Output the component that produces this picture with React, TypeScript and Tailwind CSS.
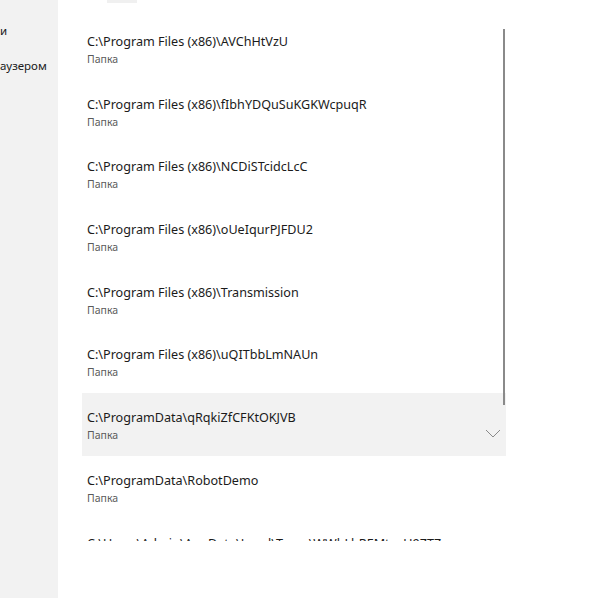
import React from 'react';

const folders = [
  'C:\\Program Files (x86)\\AVChHtVzU',
  'C:\\Program Files (x86)\\fIbhYDQuSuKGKWcpuqR',
  'C:\\Program Files (x86)\\NCDiSTcidcLcC',
  'C:\\Program Files (x86)\\oUeIqurPJFDU2',
  'C:\\Program Files (x86)\\Transmission',
  'C:\\Program Files (x86)\\uQITbbLmNAUn',
  'C:\\ProgramData\\qRqkiZfCFKtOKJVB',
  'C:\\ProgramData\\RobotDemo',
  'C:\\Users\\Admin\\AppData\\Local\\Temp\\WWbLbREMtzqU9ZTZ',
];

const SELECTED = 6;

function FolderRow({ path, selected }: { path: string; selected: boolean }) {
  return (
    <div
      className={`relative h-[62.7px] pl-[5px] pt-[16px] ${selected ? 'bg-[#f2f2f2]' : ''}`}
    >
      <div className="text-[12.6px] leading-[18px] text-[#1b1b1b] whitespace-nowrap">{path}</div>
      <div className="text-[10.5px] leading-[16px] text-[#5a5a5a]">Папка</div>
      {selected && (
        <svg
          className="absolute right-[5px] top-[36px]"
          width="16"
          height="9"
          viewBox="0 0 16 9"
          fill="none"
        >
          <path d="M1 1 L8 8 L15 1" stroke="#8a8a8a" strokeWidth="1" />
        </svg>
      )}
    </div>
  );
}

export default function App() {
  return (
    <div
      className="flex h-[598px] w-[600px] bg-white overflow-hidden"
      style={{ fontFamily: '"Noto Sans", "Open Sans", sans-serif' }}
    >
      <div className="w-[58px] shrink-0 bg-[#f2f2f2] pt-[21px] text-[11.5px] text-[#1b1b1b]">
        <div className="leading-[20px]">и</div>
        <div className="leading-[20px] mt-[15px] whitespace-nowrap">аузером</div>
      </div>

      <div className="flex-1">
        <div className="ml-[49px] w-[30px] h-[3px] bg-[#f0f0f0]" />
        <div className="relative ml-[24px] mt-[14px] w-[424px] h-[524px] overflow-hidden">
          {folders.map((p, i) => (
            <FolderRow key={p} path={p} selected={i === SELECTED} />
          ))}
          <div className="absolute right-[1px] top-[12px] w-[2px] h-[376px] bg-[#8a8a8a]" />
        </div>
      </div>
    </div>
  );
}
